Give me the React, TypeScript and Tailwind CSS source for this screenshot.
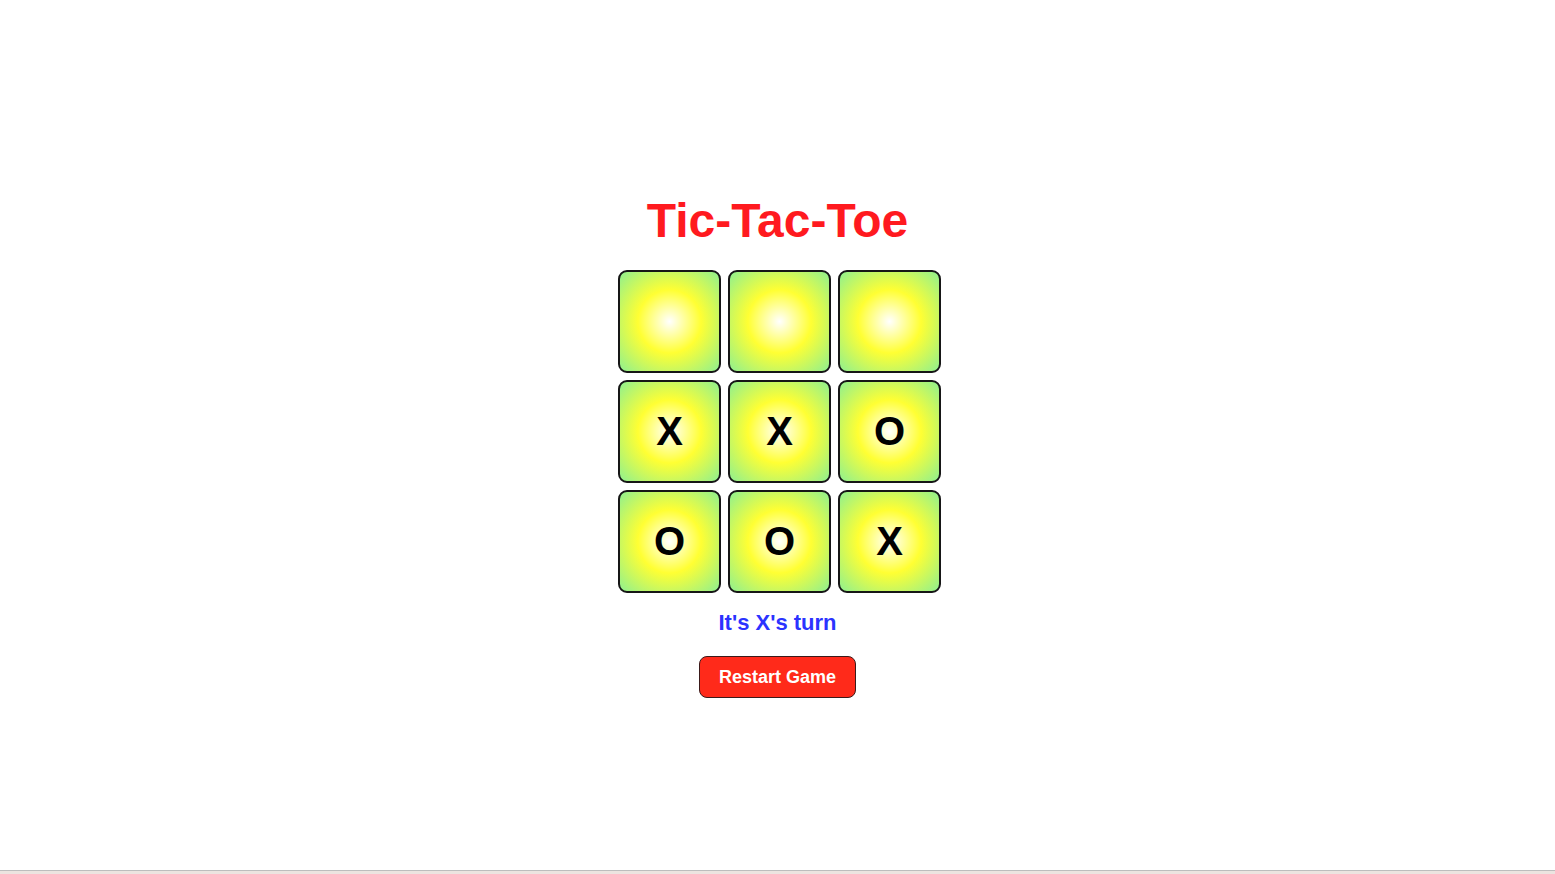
const board = ["", "", "", "X", "X", "O", "O", "O", "X"];

export default function App() {
	return (
		<div className="flex h-[874px] w-full flex-col bg-white font-['Liberation_Sans',Arial,sans-serif]">
			<main className="flex flex-1 flex-col items-center pt-[197px]">
				<h1 className="text-[48px] font-bold leading-none text-[#ff1a1f]">
					Tic-Tac-Toe
				</h1>

				<div className="ml-1 mt-[25px] grid grid-cols-3 gap-[7px]">
					{board.map((cell, index) => (
						<button
							key={index}
							className="flex h-[103px] w-[103px] items-center justify-center rounded-[9px] border-2 border-[#161616] bg-[radial-gradient(circle,#ffffff_0%,#ffff33_45%,#8ff08f_100%)] pb-[2px] text-[40px] font-bold leading-none text-black"
						>
							{cell}
						</button>
					))}
				</div>

				<p className="mt-[19px] text-[22px] font-bold leading-none text-[#2b33ff]">
					It's X's turn
				</p>

				<button className="mt-[22px] h-[42px] w-[157px] rounded-lg border border-[#3a1a1a] bg-[#ff2a1a] text-[18px] font-bold text-white">
					Restart Game
				</button>
			</main>

			<div className="h-[4px] border-t border-[#bdbdbd] bg-[#ece4e0]" />
		</div>
	);
}
